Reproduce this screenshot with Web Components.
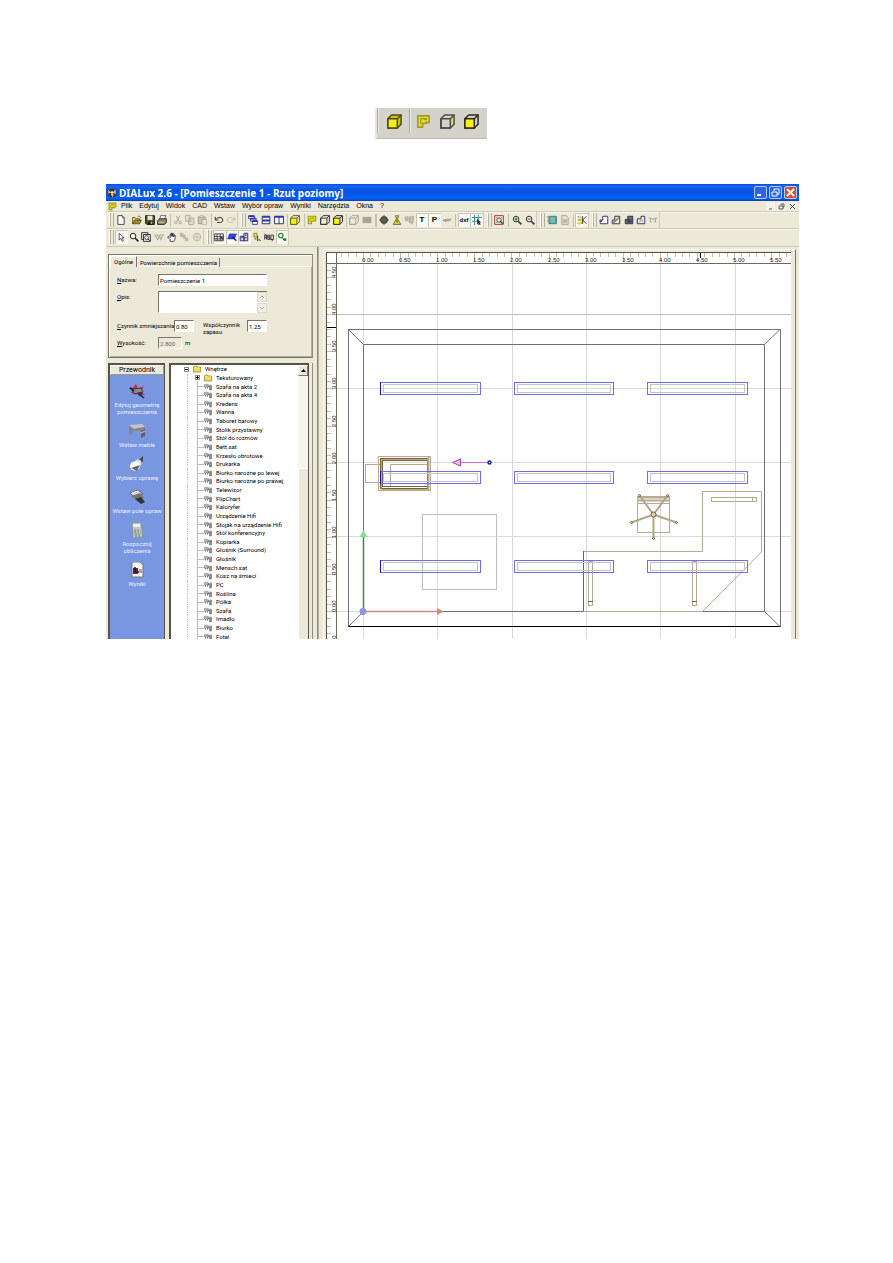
<!DOCTYPE html>
<html lang="pl">
<head>
<meta charset="utf-8">
<title>DIALux 2.6 - [Pomieszczenie 1 - Rzut poziomy]</title>
<style>
  body { margin: 0; background: #fff; color: #000; font: 7px/8px "Liberation Sans", Arial, sans-serif; }
  main { padding: 108px 94px 0 106px; }
</style>
</head>
<body>
<main>
  <view-strip></view-strip>
  <app-window></app-window>
</main>
<script>
const cube = (face, edge, side) => `<path d="M1 5 5 1H15V11L11 15H1Z" fill="${side}" stroke="${edge}" stroke-width="1.6"/><path d="M1 5H11V15H1ZM11 5 15 1" fill="${face}" stroke="${edge}" stroke-width="1.6"/>`;
const lens = (c, inner) => `<circle cx="6.500" cy="6.500" r="4.500" fill="#eef6ee" stroke="${c}" stroke-width="1.600"/><path d="M10 10 15 15" stroke="${c}" stroke-width="2.600"/>${inner}`;
const ICONS = {
  cube: cube('#f2ee1c', '#66620c', 'none'),
  cubeStrip: cube('#f2ee1c', '#4c4a10', '#c8c21c'),
  cubeWire: cube('none', '#3c3c34', 'none'),
  cubeWireSide: `<path d="M11 5 15 1V11L11 15Z" fill="#e6e02a"/>` + cube('none', '#4a4a50', 'none'),
  cubeFront: cube('#f6f21c', '#2c2c1c', 'none'),
  cubeGray: cube('none', '#aaa798', 'none'),
  ell: `<path d="M2 2H14V9H11V10H7V14H2Z" fill="#e8e22c" stroke="#a39b1c" stroke-width="1.800"/><path d="M5 11V5H11V6H8" fill="none" stroke="#a39b1c" stroke-width="1.400"/>`,
  doc: `<path d="M3 1H10L13 4V15H3Z" fill="#fff" stroke="#333" stroke-width="1.400"/><path d="M10 1V5H13" fill="none" stroke="#333"/>`,
  open: `<path d="M1 14V4H5L6 6H12V8" fill="#f5e66a" stroke="#5c5410" stroke-width="1.400"/><path d="M1 14 4 8H15L12 14Z" fill="#9a9224" stroke="#3f3a08" stroke-width="1.200"/><path d="M9 3C11 1 13 2 14 5" fill="none" stroke="#222"/>`,
  save: `<path d="M1 1H15V15H3L1 13Z" fill="#55552c" stroke="#111" stroke-width="1.500"/><path d="M4 1H12V8H4Z" fill="#e4e4dc"/><path d="M5 11H11V15H5Z" fill="#111"/><path d="M9 11H11V14H9Z" fill="#ddd"/>`,
  print: `<path d="M4 7 6 1H14L12 7Z" fill="#fff" stroke="#222"/><path d="M1 9 4 6H15V12L12 15H1Z" fill="#8c8c80" stroke="#222" stroke-width="1.500"/><path d="M2 12H11" stroke="#d5c840" stroke-width="1.500"/>`,
  cut: `<path d="M5 1 10 10M11 1 6 10" stroke="#aaa798" stroke-width="1.500"/><circle cx="4.500" cy="12" r="2" fill="none" stroke="#aaa798" stroke-width="1.500"/><circle cx="11.500" cy="12" r="2" fill="none" stroke="#aaa798" stroke-width="1.500"/>`,
  copy: `<path d="M1 1H8V10H1ZM6 5H14V15H6Z" fill="#e8e5d8" stroke="#aaa798" stroke-width="1.500"/><path d="M8 8H12M8 11H12" stroke="#aaa798"/>`,
  paste: `<path d="M2 3H13V14H2Z" fill="#c5c2b3" stroke="#a09d8e" stroke-width="1.500"/><path d="M5 1H10V4H5ZM8 7H15V15H8Z" fill="#e8e5d8" stroke="#a09d8e"/>`,
  undo: `<path d="M2 3V8H7M3 7C6 3 14 3 14 8C14 11 12 12 9 12H5" fill="none" stroke="#2c2c2c" stroke-width="1.600"/>`,
  redo: `<path d="M14 3V8H9M13 7C10 3 2 3 2 8C2 11 4 12 7 12H11" fill="none" stroke="#c0bdae" stroke-width="1.500"/>`,
  cascade: `<path d="M1 1H10V6H1ZM4 5H13V10H4ZM7 9H15V15H7Z" fill="#fff" stroke="#22226c" stroke-width="1.300"/><path d="M1 2H10M4 6H13M7 10H15" stroke="#2036b8" stroke-width="2"/>`,
  tileH: `<path d="M2 2H14V14H2ZM2 8H14" fill="#fff" stroke="#22226c" stroke-width="1.500"/><path d="M2 3H14M2 9H14" stroke="#2036b8" stroke-width="2.400"/>`,
  tileV: `<path d="M1 2H15V14H1ZM8 2V14" fill="#fff" stroke="#22226c" stroke-width="1.500"/><path d="M1 3H15" stroke="#2036b8" stroke-width="2.600"/>`,
  rectGray: `<path d="M1 3H15V13H1Z" fill="#a8a594"/>`,
  globe: `<circle cx="8" cy="8" r="5.500" fill="#a8a8a0" stroke="#333" stroke-width="1.500"/><path d="M8 0V16M0 8H16M3 5H13M3 11H13M5 3V13M11 3V13" stroke="#333" stroke-width="1.200"/>`,
  warn: `<path d="M8 5 14 15H2Z" fill="#e3d84e" stroke="#6f681e" stroke-width="1.500"/><path d="M5 1H11L9 6H7Z" fill="#c5b540" stroke="#6f681e"/><path d="M8 8V12" stroke="#333" stroke-width="1.500"/>`,
  lampsGray: `<path d="M2 3H6V9H2ZM8 3H11V12H8ZM12 2H15V9L13 14H11" fill="#c8c5b6" stroke="#a5a292" stroke-width="1.300"/>`,
  pen: `<path d="M1 8 5 6H14L15 8 12 10H8L5 12V10H1Z" fill="#a8a594"/>`,
  gridSnap: `<path d="M4 0V16M10 0V16M0 4H16M0 10H12" stroke="#2e8890" stroke-width="1.500"/><path d="M8 6V15L10 13 12 16 14 15 12 12H15Z" fill="#333"/>`,
  extents: `<path d="M1 1H15V15H1Z" fill="none" stroke="#9c3a3a" stroke-width="1.500"/><path d="M3 3 6 6M13 3 10 6M3 13 6 10" stroke="#9c3a3a"/><circle cx="8" cy="8" r="3.500" fill="#eee" stroke="#333" stroke-width="1.300"/><path d="M10 10 14 14" stroke="#333" stroke-width="2"/>`,
  zoomIn: lens('#333', '<path d="M6.500 4V9M4 6.500H9" stroke="#188a30" stroke-width="1.800"/>'),
  zoomOut: lens('#333', '<path d="M4 6.500H9" stroke="#b82a4c" stroke-width="1.800"/>'),
  lens: lens('#222', ''),
  treeWin: `<path d="M3 2H15V14H3Z" fill="#48a0a0" stroke="#1f5f66"/><path d="M5 5H13M5 8H13M5 11H13" stroke="#d4f0f0"/><path d="M0 3H4M0 9H4" stroke="#c0a020" stroke-width="2"/>`,
  docGray: `<path d="M3 1H10L13 4V15H3Z" fill="#e4e1d4" stroke="#a8a594" stroke-width="1.500"/><path d="M5 8H11M5 11H11" stroke="#a8a594" stroke-width="2"/>`,
  wand: `<path d="M1 3H8M1 8H7M1 13H8" stroke="#555" stroke-width="1.500"/><path d="M3 1H8V6H3ZM6 7H11V12H6ZM2 11H6V15H2Z" fill="#f0e428"/><path d="M15 2 9 8 15 14M9 2V14" fill="none" stroke="#333" stroke-width="1.500"/>`,
  roomA: `<path d="M6 2H14V14H2V8H6Z" fill="#fff" stroke="#2a2a86" stroke-width="1.500"/><path d="M1 8H5V11H1Z" fill="#555"/>`,
  roomB: `<path d="M6 2H14V14H2V8H6Z" fill="#e8e8cc" stroke="#2a2a86" stroke-width="1.500"/><path d="M3 13 13 4" stroke="#8c8824" stroke-width="2.400"/>`,
  roomC: `<path d="M6 2H14V14H2V7H6Z" fill="#707048" stroke="#2a2a86" stroke-width="1.500"/><path d="M5 8H12M5 11H12" stroke="#26263c" stroke-width="1.500"/>`,
  roomD: `<path d="M8 2H14V14H2V6H8Z" fill="#f0eec8" stroke="#2a2a86" stroke-width="1.500"/><path d="M5 12 9 7 11 11" fill="none" stroke="#7a7630"/>`,
  linkGray: `<path d="M1 5H6L8 8 10 5H15M3 11H6M10 11H13M4 6V11M12 6V11" fill="none" stroke="#a8a594" stroke-width="1.600"/>`,
  arrow: `<path d="M5 2V13L8 10 10 15 12 14 10 9H13Z" fill="#fff" stroke="#333" stroke-width="1.200"/>`,
  lensBox: `<path d="M1 1H11V5M1 1V12H4M4 4H15V15H4Z" fill="#eeeae0" stroke="#222" stroke-width="1.400"/><circle cx="9" cy="9" r="3" fill="#fff" stroke="#222" stroke-width="1.300"/><path d="M11 11 14 14" stroke="#222" stroke-width="1.600"/>`,
  orbit: `<path d="M1 4 6 12 9 7 11 12 15 3M4 4 8 7 12 4" fill="none" stroke="#aaa798" stroke-width="1.700"/>`,
  hand: `<path d="M5 15V12L1 8 3 7 5 9V3H7V7 2H9V7 3H11V8 5H13V11L11 15Z" fill="#fff" stroke="#222" stroke-width="1.200"/>`,
  stepsGray: `<path d="M2 2H6V7H2ZM7 5H10V10H7ZM10 10H14V14H10Z" fill="#c5c2b3" stroke="#a5a292"/>`,
  compassGray: `<circle cx="8" cy="8" r="6" fill="none" stroke="#b5b2a3" stroke-width="1.500"/><path d="M8 2V14M2 8H14" stroke="#b5b2a3" stroke-width="1.300"/>`,
  table: `<path d="M1 3H15V14H1ZM1 7H15M5 3V14M10 3V14M1 11H15" fill="#fff" stroke="#333" stroke-width="1.400"/><path d="M9 8H14V13" fill="#333"/>`,
  areaBlue: `<path d="M4 3H15L12 11H1Z" fill="#2848e8" stroke="#1830b0"/><path d="M9 8 15 14" stroke="#222" stroke-width="2"/>`,
  blocks: `<path d="M2 7H8V14H2ZM8 2H14V14H8Z" fill="#d8d8e8" stroke="#24247a" stroke-width="1.500"/><path d="M4 9H6M10 5H12M10 9H12" stroke="#333" stroke-width="2"/>`,
  lampPick: `<path d="M3 2H8V8H3Z" fill="#f0e030" stroke="#665f10"/><path d="M9 6V14L11 12 14 14M4 11H7" fill="none" stroke="#333" stroke-width="1.500"/>`,
  beam: `<path d="M1 12V5H4V12M1 9H4M6 5V12H9V5ZM11 5H15V12H11ZM1 3 14 14" fill="none" stroke="#333" stroke-width="1.500"/>`,
  nodes: `<circle cx="6" cy="5.500" r="3.500" fill="#fff" stroke="#1f9040" stroke-width="2"/><path d="M9 9 11 13H14" fill="none" stroke="#333" stroke-width="1.600"/><path d="M11 10H15V14H11Z" fill="#1f9040"/>`,
  app: `<circle cx="8" cy="8" r="7" fill="#3a3328"/><path d="M2 3 7 7 2 9ZM14 2 9 7 14 10ZM6 10 11 9 9 15Z" fill="#f4b460"/><circle cx="8" cy="7" r="2" fill="#fff"/>`,
  folder: `<path d="M1 4 3 2H7L8 4H15V14H1Z" fill="#f0dc58" stroke="#8a7a20" stroke-width="1.400"/><path d="M2 6H14" stroke="#fff6b0"/>`,
  item: `<path d="M0 3 7 2V8H0Z" fill="#b6b6b6" stroke="#888"/><path d="M8 4H15V14H11V8H8Z" fill="#8a8a8a" stroke="#666"/><path d="M3 8V11M7 8V11" stroke="#777" stroke-width="2"/><path d="M9 5H13" stroke="#ddd"/>`,
  gGeometry: `<path d="M0 4 4 5 7 1 9 6 15 3 12 8 16 12 8 11 2 10 4 7Z" fill="#c8283c"/><path d="M3 6 12 5 14 9 5 11Z" fill="#8d8a96" stroke="#3a3444"/><path d="M1 5 5 8M10 11 15 15" stroke="#222" stroke-width="1.600"/><circle cx="11" cy="11" r="2" fill="#34303c"/>`,
  gDesk: `<path d="M0 2 13 1 16 4 5 6Z" fill="#c4c4c4"/><path d="M0 3 5 6V8H3V12L0 10ZM5 6 16 4V13L12 15V8H5Z" fill="#858585"/><path d="M12 8 16 6V13L12 15Z" fill="#626262"/><path d="M12 10 16 8" stroke="#ccc"/>`,
  gLamp: `<path d="M10 4 14 0V5L12 7Z" fill="#444"/><circle cx="9" cy="7" r="3.500" fill="#ddd"/><ellipse cx="6" cy="10" rx="5" ry="4.500" fill="#fff"/><path d="M2 12 8 15 11 9" fill="#666"/>`,
  gField: `<path d="M1 4 9 1 14 5 5 8Z" fill="#d8d8e0" stroke="#666"/><path d="M2 7 11 4 15 9 7 11Z" fill="#777"/><path d="M6 10 12 8 16 13 12 15Z" fill="#333"/><path d="M3 4 9 2" stroke="#fff"/>`,
  gCalc: `<path d="M3 1 12 0 14 15 4 16Z" fill="#bcc6c4" stroke="#8a9494"/><path d="M4 2H11V5H4Z" fill="#e4f4ec"/><path d="M5 8H11M5 10H12M6 12H12M6 14H12" stroke="#748084" stroke-dasharray="2 1"/>`,
  gResults: `<path d="M3 0H11L14 3V15H3Z" fill="#f4f4f4" stroke="#777"/><path d="M4 6H9V12H4Z" fill="#8c1c30"/><path d="M6 5V10H12" fill="none" stroke="#222" stroke-width="1.600"/><path d="M10 7H13V11H10Z" fill="#aaa"/>`
};

const define = (name, css, html, ready) => {
  const t = document.createElement('template');
  t.innerHTML = `<style>*{box-sizing:border-box}button{font:inherit;color:inherit;border:0;background:none;padding:0;margin:0;white-space:nowrap}${css}</style>${html}`;
  customElements.define(name, class extends HTMLElement {
    constructor() { super(); this.attachShadow({ mode: 'open' }).append(t.content.cloneNode(true)); }
    connectedCallback() { if (ready) ready(this, this.shadowRoot); }
  });
};

define('ui-icon', `:host{display:block;width:var(--size,10px);height:var(--size,10px);flex:none}svg{display:block;width:100%;height:100%}`,
  `<svg viewBox="0 0 16 16" aria-hidden="true"></svg>`,
  (el, root) => { root.querySelector('svg').innerHTML = ICONS[el.getAttribute('name')]; });

define('view-strip', `
  :host{display:flex;justify-content:center;padding-right:43px;margin-bottom:45px}
  div{display:flex;align-items:center;width:112px;height:31px;background:#d5d2cb;border-left:2px solid #e6e4de;border-bottom:1px solid #bbb8b0;padding:0 4px 4px 0;--size:15px}
  button{flex:1;display:grid;place-items:center}
  button:nth-of-type(1){flex:none;width:30px}
  i{width:2px;height:24px;border-left:1px solid #aaa79f;border-right:1px solid #eceae4}`,
  `<div role="toolbar" aria-label="Widok pomieszczenia">
    <i></i><button aria-label="Widok 3D"><ui-icon name="cubeStrip"></ui-icon></button><i></i>
    <button aria-label="Rzut poziomy"><ui-icon name="ell"></ui-icon></button>
    <button aria-label="Widok z boku"><ui-icon name="cubeWireSide"></ui-icon></button>
    <button aria-label="Widok z przodu"><ui-icon name="cubeFront"></ui-icon></button>
  </div>`);

define('title-bar', `
  :host{display:flex;align-items:center;gap:2px;height:17px;padding:0 2px 0 1px;background:linear-gradient(#0a4fd0,#1668f4 15%,#0452e0 40%,#0560f8 85%,#0440b4);color:#fff}
  h1{flex:1;margin:0;font:bold 10px/16px "Noto Sans","Open Sans",sans-serif;white-space:nowrap}
  button{width:13px;height:13px;border:1px solid #b8ccf8;border-radius:2px;background:#2c62e4;display:grid;place-items:center}
  button svg{width:9px;height:9px}
  .close{background:#dc4a2c}`,
  `<ui-icon name="app"></ui-icon><h1>DIALux 2.6 - [Pomieszczenie 1 - Rzut poziomy]</h1>
   <button aria-label="Minimalizuj"><svg viewBox="0 0 9 9"><path d="M1 7H5" stroke="#fff" stroke-width="2"/></svg></button>
   <button aria-label="Przywróć"><svg viewBox="0 0 9 9"><path d="M3 3V1H8V6H6M1 4H6V8H1Z" fill="none" stroke="#fff"/></svg></button>
   <button class="close" aria-label="Zamknij"><svg viewBox="0 0 9 9"><path d="M1 1 8 8M8 1 1 8" stroke="#fff" stroke-width="2"/></svg></button>`);

define('menu-bar', `
  :host{display:flex;align-items:center;height:10px;padding:0 2px;background:#ece9d8;--size:9px}
  nav{display:flex;gap:7px;flex:1;padding-left:4px}
  .mdi{display:flex;gap:2px}.mdi button{width:9px;height:9px;background:#f4f2e8}.mdi svg{display:block;width:9px;height:9px}`,
  `<ui-icon name="ell"></ui-icon><nav></nav>
   <div class="mdi"><button aria-label="Minimalizuj dokument"><svg viewBox="0 0 9 9"><path d="M3 7H6" stroke="#555"/></svg></button>
   <button aria-label="Przywróć dokument"><svg viewBox="0 0 9 9"><path d="M4 3V2H7V5H6M2 4H6V7H2Z" fill="none" stroke="#555"/></svg></button>
   <button aria-label="Zamknij dokument"><svg viewBox="0 0 9 9"><path d="M2 2 7 7M7 2 2 7" stroke="#444"/></svg></button></div>`,
  (el, root) => { root.querySelector('nav').innerHTML = ['Plik','Edytuj','Widok','CAD','Wstaw','Wybór opraw','Wyniki','Narzędzia','Okna','?'].map(m => `<button>${m}</button>`).join(''); });

/* items: icon names; "|" is a visible divider, "_" an empty one, a leading "+" marks a pressed button */
define('tool-group', `
  :host{display:flex;align-items:center;height:16px;padding-left:3px;border-right:1px solid #d0cdbd}
  .grip{width:5px;height:14px;border:solid #fff;border-width:0 1px;border-right-color:#b5b2a2;box-shadow:inset 1px 0 #b5b2a2;margin-right:1px;flex:none}
  button{flex:12 1 0;min-width:0;height:14px;display:grid;place-items:center}
  .on{background:#f8f7f1;box-shadow:inset 1px 1px #c8c5b5}
  b{font-size:8px}
  .dxf{font-size:6px}
  i{flex:4 1 0;height:13px;background:linear-gradient(90deg,transparent 40%,#c4c1b0 40% 70%,transparent 70%)}
  i.blank{background:none}`,
  `<span class="grip"></span>`,
  (el, root) => {
    const letters = { T: '<b>T</b>', P: '<b>P</b>', dxf: '<b class="dxf">dxf</b>' };
    for (const raw of el.getAttribute('items').split(' ')) {
      if (raw === '|' || raw === '_') { const i = document.createElement('i'); if (raw === '_') i.className = 'blank'; root.append(i); continue; }
      const name = raw.replace('+', ''), b = document.createElement('button');
      if (raw[0] === '+') b.className = 'on';
      b.setAttribute('aria-label', name);
      b.innerHTML = letters[name] || `<ui-icon name="${name}"></ui-icon>`;
      root.append(b);
    }
  });

define('tool-rows', `
  :host{display:block;background:#ece9d8}
  div{display:flex;border-top:1px solid #cfccbc;box-shadow:inset 0 1px #f7f5ec}
  div:first-of-type{height:17px}div:last-of-type{height:18px}
  .g1{width:132px}.g2{width:246px}.g3{width:53px}.g4{width:52px}.g5{width:71px}.h1{width:98px}.h2{width:85px}`,
  `<div>
    <tool-group class="g1" items="doc _ open save print | cut copy paste | undo redo"></tool-group>
    <tool-group class="g2" items="cascade tileH tileV | cube | ell cubeWire cubeFront | cubeGray rectGray | globe warn lampsGray +T +P pen | +dxf +gridSnap"></tool-group>
    <tool-group class="g3" items="extents | zoomIn zoomOut"></tool-group>
    <tool-group class="g4" items="treeWin docGray | +wand"></tool-group>
    <tool-group class="g5" items="roomA roomB roomC roomD linkGray"></tool-group>
  </div><div>
    <tool-group class="h1" items="+arrow lens lensBox orbit hand stepsGray compassGray"></tool-group>
    <tool-group class="h2" items="+table +areaBlue +blocks lampPick beam +nodes"></tool-group>
  </div>`);

define('room-properties', `
  :host{display:block;height:104px;border:1px solid #77746a;border-right-color:#8f8c80;box-shadow:inset 1px 1px #fff;padding:1px 0 0 1px}
  .tabs{display:flex;align-items:flex-end;height:11px;margin-bottom:-1px;position:relative}
  .tabs button{height:9px;border-right:1px solid #77746a;padding:0 2px 0 3px}
  .tabs .active{height:11px;border-left:1px solid #fff;border-top:1px solid #fff;background:#ece9d8;padding:0 3px}
  form{height:91px;border-top:1px solid #fff;border-right:1px solid #b0ad9c;border-bottom:1px solid #b0ad9c;padding:7px 0 0 7px;display:grid;grid-template-columns:41px 109px;grid-template-rows:12px 22px 12px 12px;row-gap:5px}
  label{white-space:nowrap;line-height:12px}
  input,textarea{font:inherit;color:#000;background:#fff;border:1px solid #fff;border-top-color:#77746a;border-left-color:#77746a;border-radius:0;padding:0 1px;margin:0;height:12px;min-width:0;outline:0}
  textarea{display:block;flex:1;height:22px;resize:none;overflow:hidden;border-right:0}
  .area{display:flex}
  .scroll{width:10px;display:grid;background:#fff;border-top:1px solid #77746a;gap:1px}
  .scroll button{background:#f0eee2;display:grid;place-items:center;border:1px solid #dddacb}
  .scroll svg{width:6px;height:4px}
  .pair{grid-column:1 / -1;display:flex;align-items:center;margin-top:2px;margin-bottom:-2px}
  .pair label:first-child{width:57px}
  .pair input{width:20px}
  .wide{width:44px;margin-left:9px;line-height:7px;white-space:normal;padding-top:4px}
  .unit{display:flex;gap:3px;align-items:center;margin-top:2px;margin-bottom:-2px}.unit input{width:24px}
  .low{padding-top:2px}
  input:disabled{background:#ece9d8;color:#666;border-right-color:#fff}`,
  `<div class="tabs" role="tablist"><button role="tab" class="active" aria-selected="true">Ogólne</button><button role="tab">Powierzchnie pomieszczenia</button></div>
  <form>
    <label for="name"><u>N</u>azwa:</label><input id="name" value="Pomieszczenie 1">
    <label for="desc"><u>O</u>pis:</label><div class="area"><textarea id="desc"></textarea><div class="scroll"><button type="button" aria-label="W górę"><svg viewBox="0 0 6 4"><path d="M1 3 3 1 5 3" fill="none" stroke="#aaa798"/></svg></button><button type="button" aria-label="W dół"><svg viewBox="0 0 6 4"><path d="M1 1 3 3 5 1" fill="none" stroke="#aaa798"/></svg></button></div></div>
    <div class="pair"><label for="red"><u>C</u>zynnik zmniejszania:</label><input id="red" value="0.80"><label class="wide" for="res">Współczynnik zapasu</label><input id="res" value="1.25"></div>
    <label class="low" for="h"><u>W</u>ysokość:</label><div class="unit"><input id="h" value="2.800" disabled><span>m</span></div>
  </form>`);

define('guide-panel', `
  :host{display:flex;flex-direction:column;width:57px;border:1px solid #55534a;border-width:2px 1px 0 2px;background:#7996e0;--size:16px}
  h2{margin:0;font:inherit;font-size:7px;line-height:8px;height:10px;text-align:center;background:#ece9d8;border:1px solid #fff;border-color:#fff #99968a #99968a #fff}
  nav{display:flex;flex-direction:column;gap:8px;padding-top:8px;color:#f0f3ff}
  button{display:grid;justify-items:center;gap:2px;line-height:7px;white-space:pre;text-align:center}`,
  `<h2>Przewodnik</h2><nav></nav>`,
  (el, root) => {
    root.querySelector('nav').innerHTML = [['gGeometry','Edytuj geometrię\npomieszczenia'],['gDesk','Wstaw meble'],['gLamp','Wybierz oprawę'],['gField','Wstaw pole opraw'],['gCalc','Rozpocznij\nobliczenia'],['gResults','Wyniki']]
      .map(([i, t]) => `<button><ui-icon name="${i}"></ui-icon><span>${t}</span></button>`).join('');
  });

define('furniture-tree', `
  :host{display:flex;flex:1;min-width:0;border:1px solid #55534a;border-width:2px 1px 0 2px;background:#fff;overflow:hidden;--size:8px}
  ul{flex:1;min-width:0;list-style:none;margin:0;padding:0 0 0 22px;height:276px;display:grid;grid-auto-rows:1fr}
  li{display:flex;align-items:center;gap:4px;white-space:nowrap;margin-left:11px;position:relative;min-height:0}
  li:nth-child(n+3)::before{content:"";position:absolute;left:-7px;top:-1px;bottom:0;width:6px;border-left:1px solid #bbb;background:linear-gradient(#bbb,#bbb) 0 5px/6px 1px no-repeat}
  li::after{content:"";position:absolute;left:-17px;top:0;bottom:0;border-left:1px dotted #c4c1b8}
  li:first-child{margin-left:0}li:first-child::after{display:none}
  li[aria-expanded]::before{content:"";position:absolute;left:-9px;width:5px;height:5px;border:1px solid #8a8a80;background:linear-gradient(#000,#000) center/3px 1px no-repeat,#fff;box-sizing:border-box}
  li[aria-expanded=false]::before{background:linear-gradient(#000,#000) center/3px 1px no-repeat,linear-gradient(#000,#000) center/1px 3px no-repeat,#fff}
  .bar{width:10px;background:#f6f4ec;display:flex;flex-direction:column}
  .bar button{height:11px;background:#ece9d8;border:1px solid #fff;border-color:#fff #77746a #77746a #fff;display:grid;place-items:center}
  .bar svg{width:5px;height:3px}
  .thumb{margin-top:92px;flex:1;background:#ece9d8;border-left:1px solid #fff;border-top:1px solid #fff}`,
  `<ul role="tree"></ul><div class="bar"><button aria-label="Przewiń w górę"><svg viewBox="0 0 5 3"><path d="M0 3 2.500 0 5 3Z"/></svg></button><div class="thumb"></div></div>`,
  (el, root) => {
    const names = ['Wnętrze','Teksturowany','Szafa na akta 2','Szafa na akta 4','Kredens','Wanna','Taboret barowy','Stolik przystawny','Stół do rozmów','Bett.sat','Krzesło obrotowe','Drukarka','Biurko narożne po lewej','Biurko narożne po prawej','Telewizor','FlipChart','Kaloryfer','Urządzenie Hifi','Stojak na urządzenie Hifi','Stół konferencyjny','Kopiarka','Głośnik (Surround)','Głośnik','Mensch.sat','Kosz na śmieci','PC','Roślina','Półka','Szafa','Imadło','Biurko','Fotel'];
    root.querySelector('ul').innerHTML = names.map((n, i) => `<li role="treeitem"${i < 2 ? ` aria-expanded="${i === 0}"` : ''}><ui-icon name="${i < 2 ? 'folder' : 'item'}"></ui-icon><span>${n}</span></li>`).join('');
  });

/* Plan drawing. Everything is placed relative to the room's origin; one metre is about 74 px. */
define('plan-view', `
  :host{display:block;flex:1;min-width:0;overflow:hidden;border-top:1px solid #55534a;border-left:1px solid #55534a;background:#fff}
  svg{display:block;width:100%;height:387px}
  text{font:6px "Liberation Sans",Arial,sans-serif;fill:#222}`,
  `<svg role="img" aria-label="Rzut poziomy pomieszczenia"></svg>`,
  (el, root) => {
    const grid = [0, 74, 149, 223, 297, 372], rows = [0, -75, -149, -223, -297];
    const X0 = 36, Y0 = 358;
    const rect = (x, y, w, h, c) => `<rect x="${x + .5}" y="${y + .5}" width="${w}" height="${h}" fill="none" stroke="${c}"/>`;
    let plan = '';
    for (const x of grid) plan += `<path d="M${x + .5} -349V30" stroke="#dadada"/>`;
    for (const y of rows) plan += `<path d="M-28 ${y + .5}H430" stroke="${y === -297 ? '#bdbdbd' : '#dadada'}"/>`;
    plan += rect(59, -97, 74, 75, '#b5c6b7');
    plan += rect(-15, -282, 432, 297, '#707070') + rect(0, -267, 401, 267, '#707070');
    plan += '<path d="M-15 15.500H417" stroke="#000"/><path d="M-14.500-281.500.500-266.500M417-281.500 401.500-266.500M-14.500 15.500.500.500M417 15.500 401.500.500" stroke="#777"/>';
    // conference desk, pedestals and wall shelf
    const tan = '#b8aa92', brown = '#7a6236';
    plan += `<path d="M220.500-59.500H339.500V-119.500H398.500V-59L339.500.500H220.500" fill="none" stroke="${tan}"/><path d="M220.500-60V0" stroke="${brown}"/>`;
    plan += rect(225, -50, 4, 44, tan) + rect(329, -50, 4, 44, tan) + `<path d="M225-9.500H230M329-9.500H334" stroke="${brown}"/>`;
    plan += rect(348, -114, 45, 4, tan) + `<path d="M389.500-114V-110" stroke="${tan}"/>`;
    // swivel chair
    plan += rect(274, -115, 32, 36, tan) + `<path d="M274-113.500H307M274-110.500H307" stroke="${tan}" stroke-width="2"/><path d="M274-107.500H307" stroke="${tan}"/>`;
    for (const [x, y] of [[276, -116], [304, -116], [268, -89], [313, -89], [290, -73]])
      plan += `<path d="M290.500-96.500 ${x + .5} ${y + .5}" stroke="#b3a587" stroke-width="2"/><circle cx="${x + .5}" cy="${y + .5}" r="1" fill="none" stroke="${brown}"/>`;
    plan += `<circle cx="290.500" cy="-96.500" r="2.500" fill="#d8cfba" stroke="${brown}"/>`;
    // desk with chair in the left corner
    plan += rect(2, -147, 15, 18, tan) + rect(15, -155, 52, 34, tan) + rect(17, -153, 47, 30, brown) + rect(18, -152, 47, 30, tan) + rect(19, -151, 45, 26, brown);
    plan += `<path d="M65.500-154V-121" stroke="${tan}" stroke-width="2"/><path d="M27.500-125V-146.500H64" fill="none" stroke="${tan}"/>`;
    // luminaires: three rows of three
    for (const y of [-229, -140, -51]) [17, 151, 284].forEach((x, i) => {
      plan += rect(x + 3, y + 2, i === 1 ? 93 : 94, 8, '#c4c4c4') + rect(x, y, i === 1 ? 99 : 100, 12, '#6c6cf6');
      if (i === 0) plan += `<path d="M${x + .5} ${y}V${y + 13}" stroke="#1010c8"/>`;
    });
    // luminaire direction and coordinate axes
    plan += '<path d="M97-148.500H125" stroke="#d565d8"/><path d="M89.500-148.500 97.500-152V-145Z" fill="#f0c4f0" stroke="#a83cac"/><circle cx="126.500" cy="-148.500" r="1.500" fill="#fff" stroke="#0c249c" stroke-width="1.500"/>';
    plan += '<path d="M.500 0V-75" stroke="#3c8648" stroke-width="1.500"/><path d="M.500-81-3.500-74H4.500Z" fill="#86de8c"/><path d="M0 .500H75" stroke="#d88882" stroke-width="1.500"/><path d="M81 .500 74-3V4Z" fill="#d88882"/><circle cx="0" cy=".500" r="3.500" fill="#8f96e6"/>';
    // rulers along the top and the left edge
    let top = '', left = '';
    for (let i = -3; i < 58; i++) top += `<path d="M${Math.round(i * 7.42) + .5} 0V${i % 5 ? 4 : 9}" stroke="#c2bfae"/>`;
    for (let i = -3; i < 47; i++) left += `<path d="M0 ${Math.round(-i * 7.42) + .5}H${i % 5 ? 4 : 9}" stroke="#c2bfae"/>`;
    for (let i = 0; i < 12; i++) top += `<text x="${Math.round(i * 37.1) - 1}" y="9">${(i / 2).toFixed(2)}</text>`;
    for (let i = -1; i < 10; i++) left += `<text transform="translate(9 ${Math.round(-i * 37.1) + 1}) rotate(-90)">${(i / 2).toFixed(2)}</text>`;
    root.querySelector('svg').innerHTML = `<g transform="translate(${X0} ${Y0})">${plan}</g>
      <path d="M0 0H2000V10H9V387H0Z" fill="#fff"/>
      <g transform="translate(${X0} 0)">${top}<path d="M337.500 0V5" stroke="#000"/></g><g transform="translate(0 ${Y0})">${left}<path d="M0-283.500H10" stroke="#000"/></g>
      <path d="M0 0H9V9H0Z" fill="#fff"/><path d="M9.500 0V387M0 10.500H2000" stroke="#6c6a5c"/>`;
  });

define('app-window', `
  :host{display:block;background:#ece9d8}
  .work{display:flex;height:393px;border-top:1px solid #cfccbc;overflow:hidden}
  .side{width:211px;flex:none;display:flex;flex-direction:column;gap:5px;padding:7px 4px 0 2px;font-family:Roboto,"Liberation Sans",sans-serif;font-size:6px}
  .lower{display:flex;gap:4px;flex:1;min-height:0;padding-right:3px;border-right:1px solid #8f8c80}
  .split{width:2px;background:#8a877c;border-right:1px solid #b5b2a2;flex:none}
  .doc{flex:1;min-width:0;display:flex;margin:2px 3px 0 4px;padding:2px 4px 0 2px;border:1px solid #fff;border-right:1px solid #77746a;border-bottom:0}`,
  `<title-bar></title-bar><menu-bar></menu-bar><tool-rows></tool-rows>
   <div class="work">
     <div class="side"><room-properties></room-properties><div class="lower"><guide-panel></guide-panel><furniture-tree></furniture-tree></div></div>
     <div class="split"></div>
     <div class="doc"><plan-view></plan-view></div>
   </div>`);
</script>
</body>
</html>
